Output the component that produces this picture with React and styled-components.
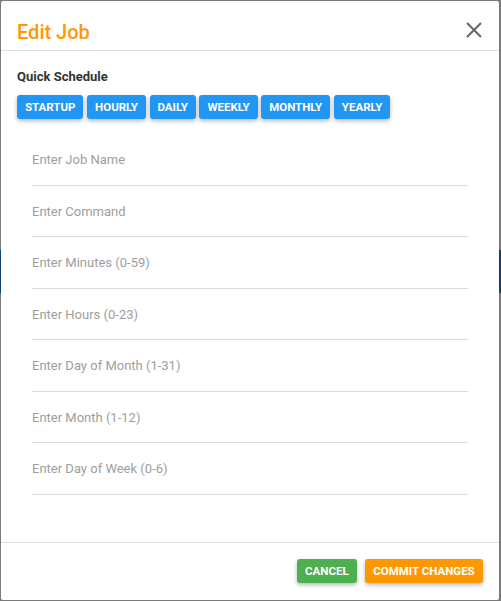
import React from "react";
import styled, { createGlobalStyle } from "styled-components";

const Global = createGlobalStyle`
  html, body { margin: 0; padding: 0; }
  body {
    width: 501px;
    height: 601px;
    overflow: hidden;
    background: linear-gradient(
      to bottom,
      #7a7a7a 0px, #7a7a7a 250px,
      #163f6b 250px, #163f6b 293px,
      #7a7a7a 293px, #7a7a7a 601px
    );
    font-family: Roboto, "Liberation Sans", sans-serif;
  }
  * { box-sizing: border-box; }
`;

const Backdrop = styled.div`
  padding: 1px 3px 2px 1px;
  width: 501px;
  height: 601px;
`;

const Dialog = styled.div`
  width: 498px;
  height: 599px;
  background: #fff;
  border-radius: 2px;
  display: flex;
  flex-direction: column;
`;

const Header = styled.div`
  display: flex;
  align-items: flex-start;
  justify-content: space-between;
  height: 50px;
  padding: 19px 16px 0 16px;
  border-bottom: 1px solid #dedede;
`;

const Title = styled.h2`
  margin: 0;
  font-size: 20px;
  line-height: 24px;
  font-weight: 500;
  color: #ff9800;
`;

const CloseButton = styled.button`
  border: none;
  background: none;
  padding: 0;
  margin: 1px 0 0 0;
  width: 18px;
  height: 18px;
  display: flex;
  align-items: center;
  justify-content: center;
  cursor: pointer;
`;

const Body = styled.div`
  flex: 1;
  padding: 18px 16px 0 16px;
  display: flex;
  flex-direction: column;
`;

const Label = styled.div`
  font-size: 13px;
  line-height: 16px;
  font-weight: 700;
  color: #333;
`;

const ChipRow = styled.div`
  display: flex;
  gap: 3.6px;
  margin-top: 9.6px;
`;

const ActionButton = styled.button`
  height: 24px;
  padding: 0 8px;
  border: none;
  border-radius: 3px;
  background: ${(p) => p.$color};
  color: #fff;
  font-family: Roboto, "Liberation Sans", sans-serif;
  font-size: 11.5px;
  line-height: 24px;
  font-weight: 700;
  text-transform: uppercase;
  box-shadow: 0 2px 4px rgba(0, 0, 0, 0.28);
  cursor: pointer;
  white-space: nowrap;
`;

const Fields = styled.div`
  display: flex;
  flex-direction: column;
  margin: 15.5px 15px 0 15px;
`;

const Field = styled.div`
  height: 51.5px;
  padding: 18px 0 16.5px 0;
  border-bottom: 1px solid #dcdcdc;
`;

const Input = styled.input`
  display: block;
  width: 100%;
  height: 16px;
  border: none;
  outline: none;
  padding: 0;
  font-family: Roboto, "Liberation Sans", sans-serif;
  font-size: 13px;
  line-height: 16px;
  color: #333;
  &::placeholder { color: #9e9e9e; }
`;

const Footer = styled.div`
  height: 58px;
  border-top: 1px solid #dedede;
  display: flex;
  justify-content: flex-end;
  align-items: flex-start;
  gap: 8.6px;
  padding: 15.5px 16.3px 0 0;
`;

const presets = ["Startup", "Hourly", "Daily", "Weekly", "Monthly", "Yearly"];
const fields = [
  "Enter Job Name",
  "Enter Command",
  "Enter Minutes (0-59)",
  "Enter Hours (0-23)",
  "Enter Day of Month (1-31)",
  "Enter Month (1-12)",
  "Enter Day of Week (0-6)",
];

export default function App() {
  return (
    <>
      <Global />
      <Backdrop>
        <Dialog>
          <Header>
            <Title>Edit Job</Title>
            <CloseButton aria-label="close">
              <svg width="16" height="16" viewBox="0 0 16 16">
                <path d="M1 1 L15 15 M15 1 L1 15" stroke="#666" strokeWidth="2" strokeLinecap="butt" />
              </svg>
            </CloseButton>
          </Header>
          <Body>
            <Label>Quick Schedule</Label>
            <ChipRow>
              {presets.map((p) => (
                <ActionButton key={p} $color="#2196f3">{p}</ActionButton>
              ))}
            </ChipRow>
            <Fields>
              {fields.map((f) => (
                <Field key={f}>
                  <Input placeholder={f} />
                </Field>
              ))}
            </Fields>
          </Body>
          <Footer>
            <ActionButton $color="#4caf50">Cancel</ActionButton>
            <ActionButton $color="#ff9800">Commit Changes</ActionButton>
          </Footer>
        </Dialog>
      </Backdrop>
    </>
  );
}
